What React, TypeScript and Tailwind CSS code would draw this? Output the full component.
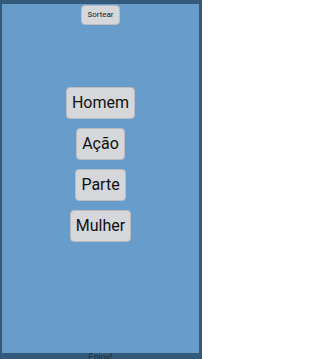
export default function App() {
  const words = ['Homem', 'Ação', 'Parte', 'Mulher']

  return (
    <div className="w-[202px] h-[359px] overflow-hidden bg-[#335a7b] pt-[4px] pl-[2px] pr-[3px] font-['Roboto',_'Liberation_Sans',_sans-serif]">
      <div className="h-[349px] bg-[#679ccb] flex flex-col items-center">
        <button className="mt-[1px] h-[20px] px-[5px] rounded-[4px] bg-[#d5d7db] border border-[#b9bcc2] text-[8px] text-[#222] leading-none">
          Sortear
        </button>
        <div className="mt-[62px] flex flex-col items-center gap-[9px]">
          {words.map((w) => (
            <button
              key={w}
              className="h-[32px] px-[5px] rounded-[4px] bg-[#d5d7db] border border-[#b9bcc2] text-[16px] text-[#111] leading-none"
            >
              {w}
            </button>
          ))}
        </div>
      </div>
      <div className="text-center text-[9px] leading-[10px] text-[#1c2c3c] -mt-[1px]">Enjoy!</div>
    </div>
  )
}
